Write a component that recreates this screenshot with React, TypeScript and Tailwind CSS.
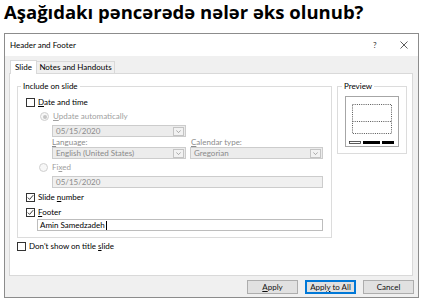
import React from "react";

const U = ({ children }: { children: React.ReactNode }) => (
  <span className="underline underline-offset-[1px] decoration-[0.5px]">{children}</span>
);

const Check = ({ checked }: { checked?: boolean }) => (
  <span className="flex h-[9px] w-[9px] shrink-0 items-center justify-center border border-[#333333] bg-white">
    {checked && (
      <svg width="7" height="7" viewBox="0 0 7 7">
        <polyline points="0.8,3.6 2.6,5.4 6.2,1.2" fill="none" stroke="#222" strokeWidth="0.9" />
      </svg>
    )}
  </span>
);

const Radio = ({ on }: { on?: boolean }) => (
  <span className="flex h-[9px] w-[9px] shrink-0 items-center justify-center rounded-full border border-[#cfcfcf] bg-[#f7f7f7]">
    {on && <span className="h-[4px] w-[4px] rounded-full bg-[#c4c4c4]" />}
  </span>
);

const Combo = ({ value, w }: { value: string; w: string }) => (
  <div className={`flex h-[12px] items-center justify-between border border-[#cccccc] bg-[#ececec] pl-[3px] pr-[1px] ${w}`}>
    <span className="text-[#8a8a8a]">{value}</span>
    <span className="flex h-[9px] w-[11px] items-center justify-center border border-[#c4c4c4] bg-[#f2f2f2]">
      <svg width="5" height="3" viewBox="0 0 5 3">
        <polyline points="0.3,0.4 2.5,2.6 4.7,0.4" fill="none" stroke="#8a8a8a" strokeWidth="0.7" />
      </svg>
    </span>
  </div>
);

const Btn = ({ children, primary }: { children: React.ReactNode; primary?: boolean }) => (
  <button
    className={`flex h-[14px] w-[51px] items-center justify-center bg-[#e1e1e1] text-[#111] ${
      primary ? "border border-[#0078d7] shadow-[inset_0_0_0_1px_#0078d7]" : "border border-[#adadad]"
    }`}
  >
    <span className="whitespace-nowrap">{children}</span>
  </button>
);

export default function App() {
  return (
    <div className="h-[300px] w-[421px] overflow-hidden bg-white font-['Lato',sans-serif]">
      <h1 className="h-[33px] whitespace-nowrap pl-[4px] font-['Open_Sans',sans-serif] text-[18.5px] font-bold leading-[24px] text-black">
        Aşağıdakı pəncərədə nələr əks olunub?
      </h1>

      <div className="ml-[4px] flex h-[265px] w-[415px] flex-col border border-[#8c8c8c] bg-[#f0f0f0] text-[8px] leading-[11px] text-black">
        <div className="flex h-[22px] items-center bg-white pl-[5px]">
          <span className="flex-1">Header and Footer</span>
          <span className="w-[27px] text-[#333]">?</span>
          <span className="flex w-[18px] items-center">
            <svg width="8" height="8" viewBox="0 0 8 8">
              <path d="M0.5 0.5 L7.5 7.5 M7.5 0.5 L0.5 7.5" stroke="#333" strokeWidth="0.8" fill="none" />
            </svg>
          </span>
        </div>

        <div className="mt-[4px] flex items-end pl-[5px]">
          <div className="relative z-10 -mb-px flex h-[14px] w-[27px] items-center justify-center border border-b-0 border-[#d9d9d9] bg-white">
            Slide
          </div>
          <div className="flex h-[12px] w-[78px] items-center justify-center whitespace-nowrap border border-b-0 border-l-0 border-[#d9d9d9] bg-[#f0f0f0]">
            Notes and Handouts
          </div>
        </div>

        <div className="ml-[4px] flex h-[203px] w-[404px] flex-col border border-[#d9d9d9] bg-white pl-[7px] pt-[7px]">
          <div className="flex items-start gap-[5px]">
            <fieldset className="w-[315px] border border-[#dcdcdc] pb-[6px]">
              <legend className="ml-[3px] px-[2px] leading-[11px]">Include on slide</legend>
              <div className="mt-[5px] flex h-[11px] items-center gap-[3px] pl-[8px]">
                <Check />
                <span>
                  <U>D</U>ate and time
                </span>
              </div>
              <div className="mt-[3px] flex h-[11px] items-center gap-[4px] pl-[22px] text-[#a0a0a0]">
                <Radio on />
                <span>
                  <U>U</U>pdate automatically
                </span>
              </div>
              <div className="mt-[3px] pl-[34px]">
                <Combo value="05/15/2020" w="w-[134px]" />
              </div>
              <div className="mt-[1px] flex h-[9px] items-center pl-[34px] text-[#8c8c8c]">
                <span className="w-[139px]">
                  <U>L</U>anguage:
                </span>
                <span>
                  <U>C</U>alendar type:
                </span>
              </div>
              <div className="flex gap-[4px] pl-[34px]">
                <Combo value="English (United States)" w="w-[134px]" />
                <Combo value="Gregorian" w="w-[133px]" />
              </div>
              <div className="mt-[3px] flex h-[11px] items-center gap-[4px] pl-[21px] text-[#a0a0a0]">
                <Radio />
                <span>
                  Fi<U>x</U>ed
                </span>
              </div>
              <div className="mt-[3px] pl-[34px]">
                <div className="flex h-[12px] w-[271px] items-center border border-[#cccccc] bg-[#f0f0f0] pl-[3px] text-[#8a8a8a]">
                  05/15/2020
                </div>
              </div>
              <div className="mt-[4px] flex h-[11px] items-center gap-[3px] pl-[8px]">
                <Check checked />
                <span>
                  Slide <U>n</U>umber
                </span>
              </div>
              <div className="mt-[4px] flex h-[11px] items-center gap-[3px] pl-[8px]">
                <Check checked />
                <span>
                  <U>F</U>ooter
                </span>
              </div>
              <div className="mt-[1px] pl-[19px]">
                <div className="flex h-[12px] w-[286px] items-center border border-[#bdbdbd] bg-white pl-[2px] text-black">
                  Amin Samedzadeh<span className="ml-px inline-block h-[9px] w-px bg-black" />
                </div>
              </div>
            </fieldset>

            <fieldset className="h-[73px] w-[70px] border border-[#dcdcdc]">
              <legend className="ml-[4px] px-[2px] leading-[11px]">Preview</legend>
              <div className="ml-[7px] mt-[4px]">
                <svg width="54" height="51" viewBox="0 0 54 51">
                  <rect x="0.5" y="0.5" width="53" height="50" fill="#fff" stroke="#a6a6a6" />
                  <rect x="7.5" y="8.5" width="39" height="29" fill="none" stroke="#555" strokeDasharray="1 1.2" />
                  <line x1="7.5" y1="25.5" x2="46.5" y2="25.5" stroke="#555" strokeDasharray="1 1.2" />
                  <rect x="4.5" y="45.5" width="11" height="2" fill="#fff" stroke="#333" strokeWidth="0.8" />
                  <rect x="18" y="45" width="17" height="3" fill="#000" />
                  <rect x="37" y="45" width="12" height="3" fill="#000" />
                </svg>
              </div>
            </fieldset>
          </div>

          <div className="mt-[3px] flex h-[11px] items-center gap-[3px]">
            <Check />
            <span>
              Don't show on title <U>s</U>lide
            </span>
          </div>
        </div>

        <div className="mt-[4px] flex justify-end gap-[7px] pr-[4px]">
          <Btn>
            <U>A</U>pply
          </Btn>
          <Btn primary>
            Appl<U>y</U> to All
          </Btn>
          <Btn>Cancel</Btn>
        </div>
      </div>
    </div>
  );
}
